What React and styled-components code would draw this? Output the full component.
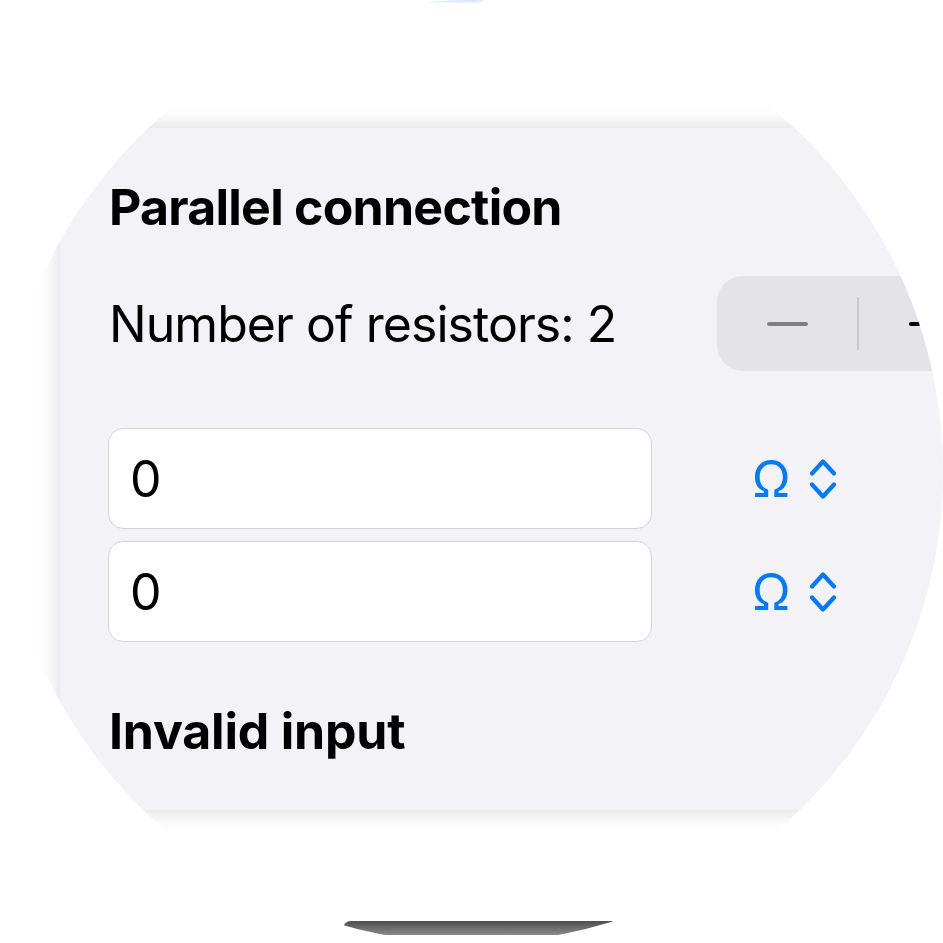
import React from "react";
import styled, { createGlobalStyle } from "styled-components";

const Global = createGlobalStyle`
  html, body { margin: 0; padding: 0; background: #ffffff; }
  body { font-family: Inter, "Noto Sans", "Liberation Sans", sans-serif; color: #000; }
  #root { width: 943px; height: 943px; }
`;

const Lens = styled.div`
  width: 943px;
  height: 943px;
  border-radius: 50%;
  overflow: hidden;
  background: #ffffff;
  display: flex;
  flex-direction: column;
`;

const TopStrip = styled.div`
  height: 128px;
  flex: none;
  display: flex;
  justify-content: flex-start;
`;

const Glow = styled.div`
  margin-left: 420px;
  margin-top: -8px;
  width: 68px;
  height: 10px;
  border-radius: 0 0 40px 40px;
  background: #cfe3ff;
  filter: blur(1px);
`;

const Panel = styled.section`
  flex: none;
  margin-left: 60px;
  width: 991px;
  height: 682px;
  box-sizing: border-box;
  padding: 49px 52px 0 48px;
  background: #f2f2f7;
  box-shadow: 0 0 22px rgba(0, 0, 0, 0.16);
  display: flex;
  flex-direction: column;
`;

const Heading = styled.h2`
  margin: 0;
  font-size: 50px;
  line-height: 60px;
  font-weight: 700;
  letter-spacing: -0.75px;
  padding-left: 1px;
`;

const StepperRow = styled.div`
  margin-top: 39px;
  display: flex;
  align-items: center;
  justify-content: space-between;
`;

const Label = styled.div`
  font-size: 50px;
  line-height: 60px;
  font-weight: 400;
  letter-spacing: -0.95px;
  padding-left: 1px;
`;

const Stepper = styled.div`
  width: 282px;
  height: 95px;
  border-radius: 26px;
  background: #e3e3e8;
  display: flex;
  align-items: center;
`;

const StepHalf = styled.div`
  flex: 1;
  height: 100%;
  display: flex;
  align-items: center;
  justify-content: center;
`;

const Bar = styled.span`
  display: block;
  width: 41px;
  height: 4px;
  border-radius: 2px;
  background: ${(p) => p.$color};
`;

const PlusMark = styled.span`
  position: relative;
  display: block;
  width: 41px;
  height: 41px;
  &::before, &::after {
    content: "";
    position: absolute;
    background: #000;
    border-radius: 2px;
  }
  &::before { left: 0; top: 18.5px; width: 41px; height: 4px; }
  &::after { left: 18.5px; top: 0; width: 4px; height: 41px; }
`;

const Divider = styled.span`
  flex: none;
  width: 2px;
  height: 53px;
  background: #c7c7cc;
  border-radius: 1px;
`;

const Inputs = styled.div`
  margin-top: 57px;
  display: flex;
  flex-direction: column;
  gap: 12px;
`;

const InputRow = styled.div`
  display: flex;
  align-items: center;
`;

const Field = styled.div`
  width: 544px;
  height: 101px;
  box-sizing: border-box;
  border: 1px solid #d4d4d8;
  border-radius: 15px;
  background: #ffffff;
  display: flex;
  align-items: center;
  padding-left: 21px;
  font-size: 50px;
  line-height: 60px;
`;

const UnitPicker = styled.div`
  margin-left: 100px;
  display: flex;
  align-items: center;
  gap: 19px;
  color: #007aff;
`;

const Omega = styled.span`
  font-size: 50px;
  line-height: 60px;
  font-weight: 400;
`;

const Chevrons = () => (
  <svg width="26" height="40" viewBox="0 0 26 40" fill="none" stroke="#007aff" strokeWidth="4.2" strokeLinecap="round" strokeLinejoin="round">
    <path d="M2 14.5 L13 2.5 L24 14.5" />
    <path d="M2 25.5 L13 37.5 L24 25.5" />
  </svg>
);

const ErrorText = styled(Heading)`
  margin-top: 59px;
  letter-spacing: -0.2px;
`;

const BottomStrip = styled.div`
  flex: none;
  margin-top: 111px;
  margin-left: 343px;
  height: 14px;
  border-top-left-radius: 8px;
  background: linear-gradient(#4e4e4e, #8a8a8a);
`;

export default function App() {
  return (
    <>
      <Global />
      <Lens>
        <TopStrip>
          <Glow />
        </TopStrip>
        <Panel>
          <Heading>Parallel connection</Heading>
          <StepperRow>
            <Label>Number of resistors: 2</Label>
            <Stepper>
              <StepHalf>
                <Bar $color="#7f7f83" />
              </StepHalf>
              <Divider />
              <StepHalf>
                <PlusMark />
              </StepHalf>
            </Stepper>
          </StepperRow>
          <Inputs>
            {[0, 1].map((i) => (
              <InputRow key={i}>
                <Field>0</Field>
                <UnitPicker>
                  <Omega>Ω</Omega>
                  <Chevrons />
                </UnitPicker>
              </InputRow>
            ))}
          </Inputs>
          <ErrorText>Invalid input</ErrorText>
        </Panel>
        <BottomStrip />
      </Lens>
    </>
  );
}
